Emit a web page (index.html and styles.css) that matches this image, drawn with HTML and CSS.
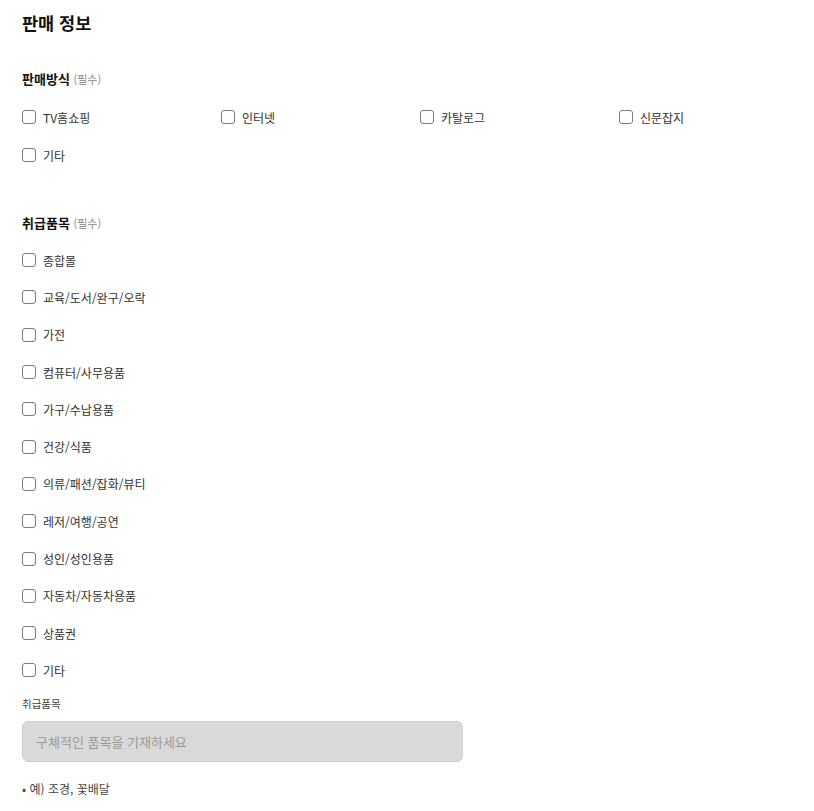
FILE: index.html
```html
<!DOCTYPE html>
<html lang="ko">
<head>
  <meta charset="UTF-8" />
  <meta name="viewport" content="width=device-width, initial-scale=1" />
  <title>판매 정보</title>
  <link rel="stylesheet" href="styles.css">
</head>
<body>

  <div class="main">
    <h1>판매 정보</h1>

    <div class="group">
      <p class="group-title">판매방식 <span>(필수)</span></p>
      <div class="options grid">
        <label><input type="checkbox" name="method" value="tv" /> TV홈쇼핑</label>
        <label><input type="checkbox" name="method" value="internet" /> 인터넷</label>
        <label><input type="checkbox" name="method" value="catalog" /> 카탈로그</label>
        <label><input type="checkbox" name="method" value="paper" /> 신문잡지</label>
        <label><input type="checkbox" name="method" value="etc" /> 기타</label>
      </div>
    </div>

    <div class="group">
      <p class="group-title">취급품목 <span>(필수)</span></p>
      <div class="options list">
        <label><input type="checkbox" name="item" /> 종합몰</label>
        <label><input type="checkbox" name="item" /> 교육/도서/완구/오락</label>
        <label><input type="checkbox" name="item" /> 가전</label>
        <label><input type="checkbox" name="item" /> 컴퓨터/사무용품</label>
        <label><input type="checkbox" name="item" /> 가구/수납용품</label>
        <label><input type="checkbox" name="item" /> 건강/식품</label>
        <label><input type="checkbox" name="item" /> 의류/패션/잡화/뷰티</label>
        <label><input type="checkbox" name="item" /> 레저/여행/공연</label>
        <label><input type="checkbox" name="item" /> 성인/성인용품</label>
        <label><input type="checkbox" name="item" /> 자동차/자동차용품</label>
        <label><input type="checkbox" name="item" /> 상품권</label>
        <label><input type="checkbox" name="item" /> 기타</label>
      </div>

      <p class="field-label">취급품목</p>
      <input type="text" class="text-input" placeholder="구체적인 품목을 기재하세요" disabled />
      <p class="note">• 예) 조경, 꽃배달</p>
    </div>
  </div>

</body>
</html>
```

FILE: styles.css
```css
* {
  box-sizing: border-box;
}

body {
  margin: 0;
  padding: 0;
  font-family: 'Noto Sans CJK KR', 'Noto Sans', sans-serif;
  background: #fff;
  color: #222;
}

.main {
  padding: 11px 22px 0;
}

h1 {
  margin: 0;
  font-size: 17.5px;
  line-height: 24px;
  font-weight: bold;
  color: #111;
}

.group-title {
  margin: 0;
  font-size: 13px;
  line-height: 20px;
  font-weight: bold;
  color: #111;
}

.group-title span {
  font-size: 11px;
  font-weight: normal;
  color: #888;
}

.group:first-of-type .group-title {
  margin-top: 34px;
}

.group + .group {
  margin-top: 39px;
}

.options {
  margin-top: 9px;
}

.options.grid {
  display: grid;
  grid-template-columns: repeat(4, 199px);
  grid-auto-rows: 38px;
}

.options.list {
  margin-top: 8.5px;
  display: flex;
  flex-direction: column;
}

.options.list label {
  height: 37.3px;
}

.options label {
  display: flex;
  align-items: center;
  gap: 7px;
  font-size: 12px;
  color: #333;
  cursor: pointer;
}

.options input[type="checkbox"] {
  appearance: none;
  margin: 0;
  width: 14px;
  height: 14px;
  border: 1.5px solid #7a7a7a;
  border-radius: 3px;
  background: #fff;
  flex-shrink: 0;
}

.options input[type="checkbox"]:checked {
  background: #333;
  border-color: #333;
}

.field-label {
  margin: 7px 0 0;
  font-size: 10.5px;
  line-height: 16px;
  color: #444;
}

.text-input {
  display: block;
  margin-top: 9px;
  width: 441px;
  height: 41px;
  padding: 0 13px;
  font-family: inherit;
  font-size: 13px;
  background: #d9d9d9;
  border: 1px solid #cfcfcf;
  border-radius: 6px;
  color: #333;
}

.text-input::placeholder {
  color: #9a9a9a;
}

.note {
  margin: 18px 0 0;
  font-size: 12px;
  line-height: 18px;
  color: #444;
}
```
